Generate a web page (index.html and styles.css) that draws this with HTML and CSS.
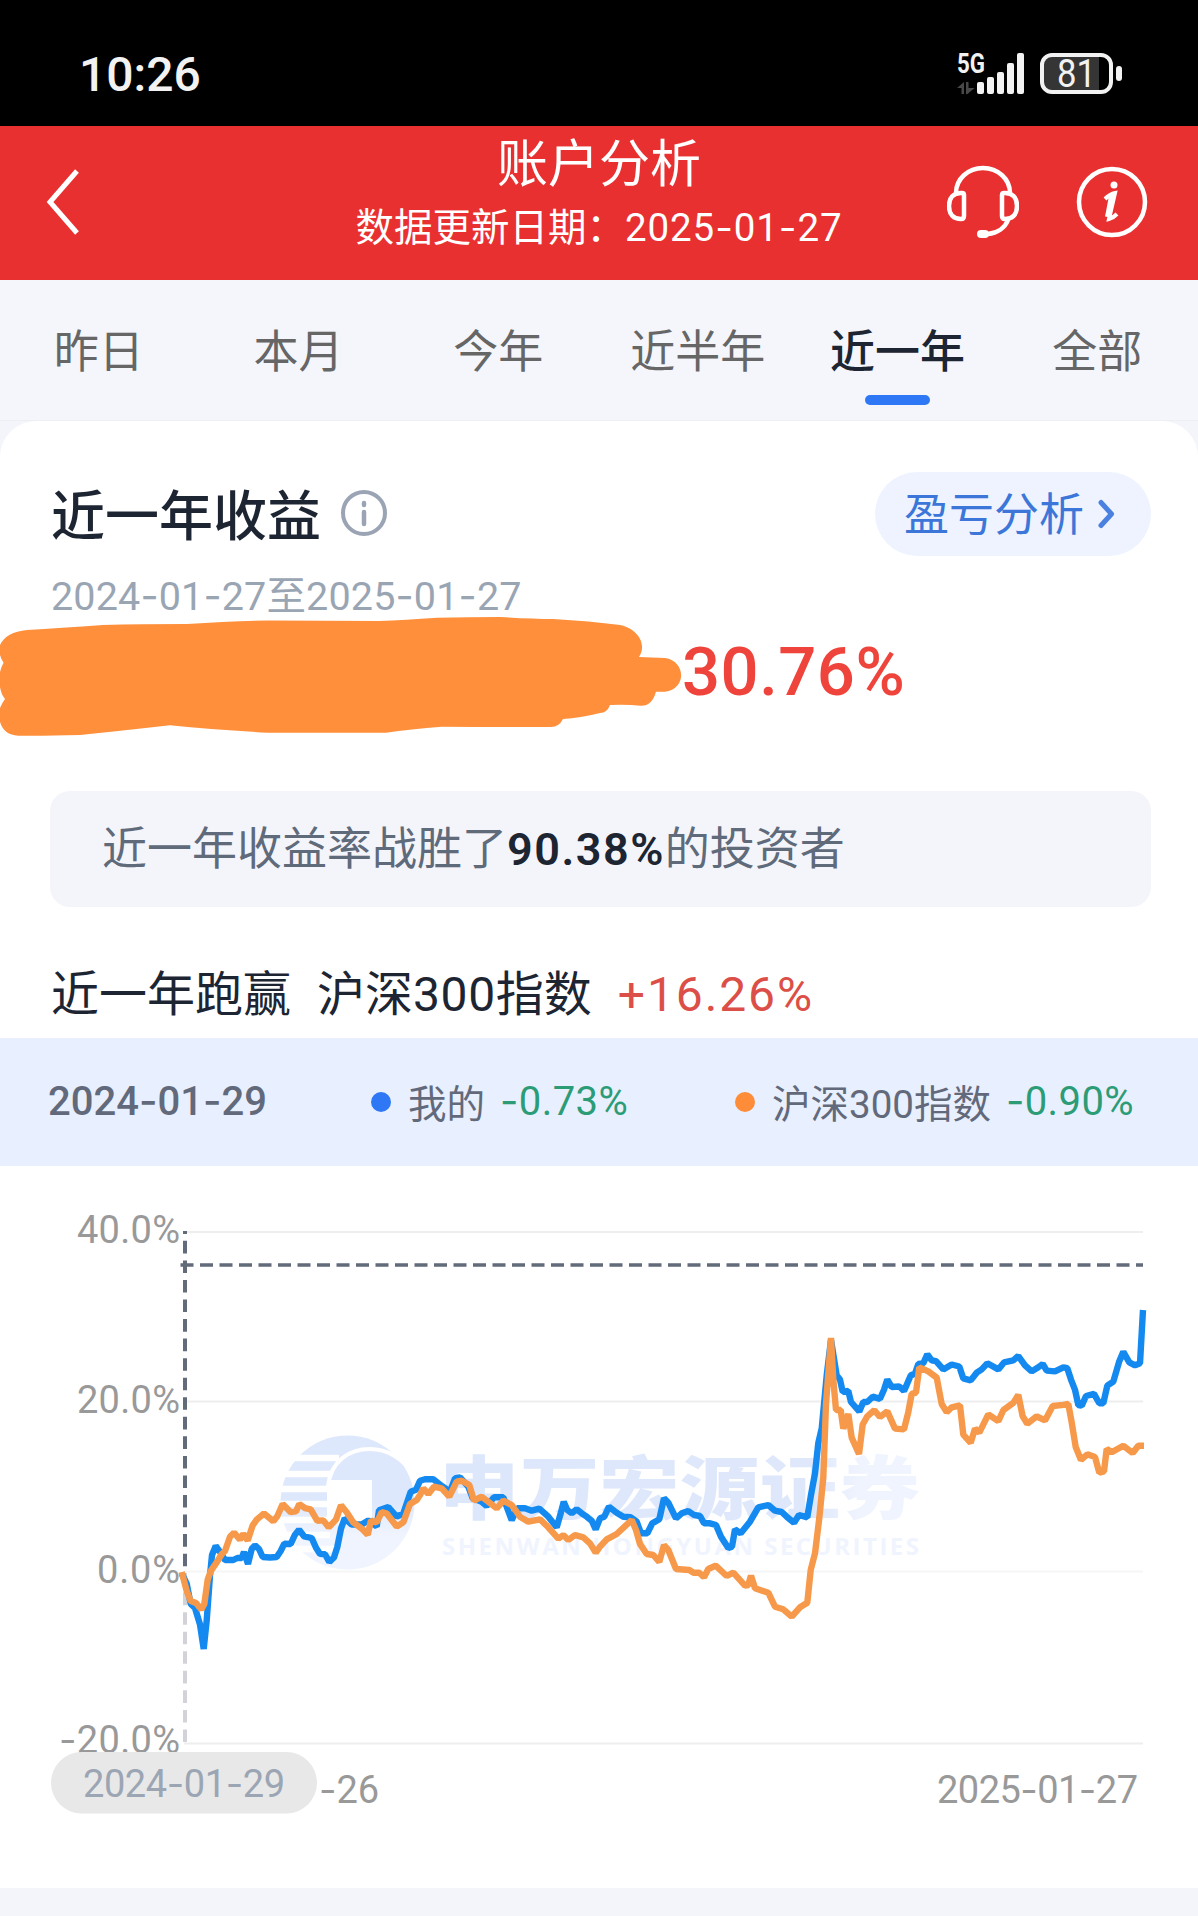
FILE: index.html
```html
<!DOCTYPE html>
<html lang="zh-CN">
<head>
<meta charset="utf-8">
<title>账户分析</title>
<link rel="stylesheet" href="styles.css">
</head>
<body>
<div class="status">
  <span class="clock">10:26</span>
  <svg class="status-icons" width="172" height="64" viewBox="952 40 172 64">
    <text x="957" y="73" class="net" textLength="28" lengthAdjust="spacingAndGlyphs">5G</text>
    <path d="M957 88l7-6v12h-2.500v-6zM966 82h2.500v6h6l-7 6h-1.500z" fill="#484848"/>
    <g fill="#f2f2f2">
      <rect x="977" y="82" width="7" height="12" rx="2"/><rect x="987" y="77" width="7" height="17" rx="2"/><rect x="997" y="72" width="7" height="22" rx="2"/><rect x="1007" y="63" width="7" height="31" rx="2"/><rect x="1017" y="53" width="7" height="41" rx="2"/>
      <rect x="1116" y="66" width="6" height="15" rx="3"/>
    </g>
    <path d="M1051 55h48v37h-48q-8 0-8-8V63q0-8 8-8z" fill="#353535"/>
    <rect x="1042" y="55" width="69" height="37" rx="10" fill="none" stroke="#f2f2f2" stroke-width="4"/>
    <text x="1057" y="86.500" class="battery" textLength="39" lengthAdjust="spacingAndGlyphs">81</text>
  </svg>
</div>
<header class="header">
  <svg class="back" width="36" height="76" viewBox="0 0 36 76"><path d="M31 7L4 38l27 31" fill="none" stroke="#fff" stroke-width="5"/></svg>
  <div class="header-text">
    <h1>账户分析</h1>
    <p>数据更新日期：<span>2025<i>-</i>01<i>-</i>27</span></p>
  </div>
  <div class="header-icons">
    <svg width="72" height="76" viewBox="0 0 72 76" fill="none" stroke="#fff" stroke-width="4.500" stroke-linecap="round">
      <path d="M9 29C9 15 21 4 36 4s27 11 27 25"/>
      <path d="M14 29h1q2 0 2 2v21q0 3-3 3C7 55 2 51 2 42s5-13 12-13zM58 29h-1q-2 0-2 2v21q0 3 3 3c7 0 12-4 12-13s-5-13-12-13z"/>
      <path d="M61 56C58 64 50 69 41 70"/><path d="M34 70h4" stroke-width="8"/>
    </svg>
    <svg width="72" height="76" viewBox="0 0 72 76">
      <circle cx="36" cy="38" r="33" fill="none" stroke="#fff" stroke-width="4.500"/>
      <circle cx="38" cy="21" r="3.500" fill="#fff"/>
      <path d="M29 35q5-5 10-6l-6 26q4-1 8-5" fill="none" stroke="#fff" stroke-width="4"/><path d="M36 32l-4 21" stroke="#fff" stroke-width="6"/>
    </svg>
  </div>
</header>
<nav class="tabs">
  <span>昨日</span><span>本月</span><span>今年</span><span>近半年</span><span class="active">近一年</span><span>全部</span>
</nav>
<main class="card">
  <section class="title-row">
    <h2>近一年收益</h2>
    <svg class="info" width="48" height="48" viewBox="0 0 48 48"><circle cx="24" cy="23" r="21" fill="none" stroke="#9aa4b4" stroke-width="4"/><path d="M24 22v12M24 13v2" stroke="#9aa4b4" stroke-width="4.500" stroke-linecap="round"/></svg>
    <a class="analysis"><span>盈亏分析</span><svg width="18" height="32" viewBox="0 0 18 32"><path d="M3 4.500L13.500 16 3 27.500" fill="none" stroke="#4a80e0" stroke-width="5" stroke-linecap="round" stroke-linejoin="round"/></svg></a>
  </section>
  <p class="range">2024<i>-</i>01<i>-</i>27至2025<i>-</i>01<i>-</i>27</p>
  <section class="amount">
    <svg width="682" height="120" viewBox="0 617 682 120"><path fill="#ff8f3b" d="M0 645Q6 632 27 630Q60 628 103 625Q140 624 187 624Q230 621 268 620.500L379 621Q405 620 437 617.700Q470 617 500 617Q530 619 553 619Q590 621 620 625C636 628 648 643 639 657L665 658C686 661 687 689 665 691.700H656Q652 706 641 705.700Q625 704 610 705Q607 713 600 713Q580 718 563 719Q559 727 551 727Q490 727 442 726.700Q410 729 386 732.700H268Q215 730 170 725.300Q120 731 80 735Q45 736 18 735.700Q4 735 0 722V708Q2 703 5 699Q1 694 0 687V672Q1 667 3.600 662.700Q1 659 0 655z"/></svg>
    <strong>30.76%</strong>
  </section>
  <p class="beat">近一年收益率战胜了<b>90.38%</b>的投资者</p>
  <section class="versus"><span>近一年跑赢</span><span class="index">沪深<span class="num">300</span>指数</span><span class="gain">+16.26%</span></section>
  <section class="legend">
    <span class="date">2024<i>-</i>01<i>-</i>29</span>
    <span class="item mine"><span class="dot"></span>我的<em><i>-</i>0.73%</em></span>
    <span class="item bench"><span class="dot"></span>沪深300指数<em><i>-</i>0.90%</em></span>
  </section>
  <svg class="chart" width="1198" height="722" viewBox="0 1166 1198 722">
    <defs><linearGradient id="fade" x1="0" x2="1"><stop offset="0" stop-color="#dde7fb"/><stop offset=".78" stop-color="#dfe8fb"/><stop offset=".88" stop-color="#f0f4fe"/></linearGradient>
    <linearGradient id="globe" x1="0" y1="0" x2="0" y2="1"><stop offset=".5" stop-color="#dee8fc"/><stop offset=".75" stop-color="#f0f4fe"/></linearGradient></defs>
    <g class="grid"><path d="M184 1232H1143M184 1401.500H1143M184 1743.500H1143"/><path class="zero" d="M184 1571.500H1143"/></g>
    <g class="watermark">
      <circle cx="347.500" cy="1502.500" r="67" fill="url(#globe)"/>
      <path d="M278 1458h61M278 1474h53M278 1489h49M278 1504h49M278 1520h49M278 1535h52M278 1549h58" stroke="#fff" stroke-width="6.500"/>
      <path d="M327 1480h45v44h-45z" fill="#fff"/>
      <path d="M328 1486C331 1461 349 1449 370 1449c17 0 32 9 44 26" fill="none" stroke="#fff" stroke-width="4"/>
      <text x="439" y="1514" class="wm-cn" textLength="481" lengthAdjust="spacingAndGlyphs">申万宏源证券</text>
      <text x="442" y="1555" class="wm-en" textLength="477">SHENWAN HONGYUAN SECURITIES</text>
    </g>
    <path d="M185 1571V1743" stroke="#d2d3d8" stroke-width="4" stroke-dasharray="12.600 6.950" stroke-dashoffset="17.500"/>
    <path d="M185 1231V1571" stroke="#626b7a" stroke-width="4" stroke-dasharray="12.600 6.950" stroke-dashoffset="9.700"/>
    <path d="M180.500 1265H1143" stroke="#626b7a" stroke-width="3.500" stroke-dasharray="13 6.500"/>
    <polyline class="line mine-line" points="181.7,1573.500 186.7,1583.7 190.7,1604 195,1608 200,1624.500 203.7,1649 206.7,1620.4 210,1575.500 212,1555 215.7,1546 220,1551.8 225,1560 233.3,1560 237.3,1558 241.7,1558 244,1552 248,1564 251.7,1549 255,1545.3 259,1549 262.7,1557 270,1557.500 276.7,1557 280.7,1551 284.3,1543.7 290.7,1544 295,1534.7 299,1529.8 304,1536.3 311.7,1538 316,1547.8 320,1553.9 325,1554.3 329.3,1562 334,1557.500 337.3,1547 341,1528.6 344.7,1518.4 351.7,1524.500 361.7,1524.500 368.3,1520.4 376.7,1526.500 379,1510.2 388.3,1507 396.7,1516.7 403.3,1513.500 410.7,1491.8 416,1489.8 420,1480.8 425,1479.3 433.3,1479.3 441.7,1486 450,1491.7 455,1478.3 460,1477.3 468.3,1486.7 472.7,1498.3 481.7,1501.7 486.7,1506 494,1497.3 503.3,1497.3 507.3,1508.3 511.7,1520 517.3,1508.3 525,1508.3 531.7,1510.7 539.3,1508.7 548.3,1516.7 556.7,1527.3 560.7,1513.3 563.7,1501.7 567.3,1510 571.7,1513.3 576.7,1509.3 581.7,1513.3 586.7,1516.7 591.7,1520.7 595.7,1529.3 600,1518.3 604.3,1516.7 609,1506.7 616.7,1512.7 623.3,1516.7 630.7,1517.3 636.7,1521.7 641,1533.3 647.3,1533.3 652.3,1523.3 659.3,1519.3 664,1498.3 668.3,1502.7 676,1518.3 681.7,1513.3 688.3,1511 694,1515 700,1516 704,1523.3 710,1523.3 716,1525 721,1536.7 728.3,1548 732,1546.7 735,1529.3 740.7,1533.3 750,1521.7 758.3,1507.3 768.3,1505 775,1510.7 781.7,1512 786.7,1516.7 794,1522.7 799,1515 807.3,1517.3 810.7,1496.7 815,1473.3 818.3,1443 821.7,1428.6 826.7,1375.500 831,1340 836.7,1375.500 840,1379.6 842.7,1391.8 848.3,1391 851,1402 859.3,1411.4 863.3,1402 867.3,1402 872.7,1396.7 880,1398.8 884,1389.8 887.3,1379.6 891.7,1387 899.3,1386.500 904,1391 910.7,1375.500 915,1373.500 918.3,1364 923.3,1363.3 927.3,1354.3 931.7,1360.4 936,1361.2 943.3,1369.4 951.7,1364.500 959.3,1366.500 963.3,1378.4 970.7,1380.4 976.7,1372.7 981.7,1369.4 987.3,1363.3 998.3,1369.4 1004,1362.4 1013.3,1360.4 1018.3,1356 1025,1365.3 1031.7,1371.4 1038.3,1367.3 1042.7,1364 1046.7,1370.6 1055,1371.4 1063.3,1367.3 1067.3,1368.2 1071,1379.6 1075,1389.8 1078.3,1405 1081.7,1405.7 1086,1396 1094,1393.9 1099.3,1403.3 1103.3,1403.3 1107.3,1385.7 1113.3,1381.6 1119.3,1361.2 1123.3,1351.8 1129.3,1362.4 1135,1365.3 1140,1363.3 1143,1310"/>
    <polyline class="line bench-line" points="181.7,1572 186.7,1591 190.7,1601 196,1602.9 201.3,1609.4 204.3,1604 207.7,1579.6 211,1570.6 216.7,1562.4 221.7,1554.3 225,1551 230,1536.7 234,1532.7 240,1539.6 243.3,1533.9 247.7,1540.4 252.7,1525.3 256.7,1519.6 264,1513.500 273.3,1521.2 277.3,1516.3 282.7,1504 290.7,1512.2 296,1511.4 299.3,1504 305,1508.2 310.7,1509.4 317.3,1520.8 323.3,1520.4 328.7,1527.3 336,1519.6 341,1505.3 346.7,1512.2 353.3,1522.4 361.7,1528.6 367.7,1534.7 371,1520.4 376.7,1522.4 381.7,1512.2 386.7,1513.500 396.7,1526.500 403.3,1522.4 410,1504 416.7,1500 420,1495 423.3,1488.3 428.3,1494 434,1486.7 441.7,1488.3 449.3,1496.7 456.7,1481.7 461.7,1480.7 469.3,1485 474,1500.7 481.7,1496.7 488.3,1501.7 496.7,1508.3 503.3,1500.7 511.7,1505 520,1516.7 528.3,1521.7 540,1519.3 548.3,1527.3 558.3,1538.7 563.3,1535 568.3,1540 575,1535 583.3,1537.3 590,1543.3 595.7,1552.7 600,1546.7 606.7,1539.3 616.7,1534 631.7,1520 636,1530 640,1544 646.7,1554 653.3,1555 659.3,1562 664,1545 668.3,1550 676,1569 689.3,1570 693.3,1572.7 699.3,1572.7 704,1577.3 708.3,1569 715.7,1565.7 726.7,1576 733.3,1572.7 745,1585.7 748.3,1585 751,1575.7 755,1588.3 768.3,1592.7 775,1606.7 783.3,1609.3 791.7,1616.7 800,1607.3 807.3,1602.7 810.7,1570 815,1553.3 819.3,1518 823.3,1477.6 826,1404 831,1338 833.3,1379.6 836,1410 840.7,1410 843.3,1428.6 848.3,1414 851.7,1437.6 859,1454 862.7,1424.500 867.3,1416.3 874.3,1410.2 880,1417 887.3,1411.4 895,1428.6 904,1429.4 908.3,1412.2 911.7,1393.9 916,1392.7 919.3,1367.3 928.3,1371.4 936.7,1377.6 941.7,1404 946.7,1412.2 951.7,1407.3 960,1405.3 963.3,1434.7 970.7,1442.9 975,1428.6 979.3,1432.7 988.3,1414.3 998.3,1421.2 1003.3,1410.2 1013.3,1402.9 1018.3,1395 1022.7,1416.3 1027.3,1423.7 1036.7,1416.3 1045,1420.4 1052.7,1406 1063.3,1404.9 1068.3,1404 1071.7,1422.4 1075.7,1447 1081,1460 1087.3,1454.3 1095,1457 1099.3,1472.7 1104,1471.4 1106.7,1449 1111.7,1452.2 1123.3,1445.7 1132.7,1453 1138.3,1445.7 1144,1445.7"/>
    <g class="axis">
      <text x="77" y="1242.500" textLength="103">40.0%</text>
      <text x="77" y="1412.500" textLength="103">20.0%</text>
      <text x="97" y="1583" textLength="83">0.0%</text>
      <text x="59" y="1752.500" textLength="121"><tspan class="dash">-</tspan>20.0%</text>
      <text x="319" y="1803" textLength="60"><tspan class="dash">-</tspan>26</text>
      <text x="937" y="1803" textLength="201">2025<tspan class="dash">-</tspan>01<tspan class="dash">-</tspan>27</text>
    </g>
    <rect x="51" y="1752" width="266" height="61.500" rx="30.700" fill="#e8e8e8"/>
    <text x="83" y="1797" class="marker" textLength="202">2024<tspan class="dash">-</tspan>01<tspan class="dash">-</tspan>29</text>
  </svg>
</main>
</body>
</html>
```
FILE: styles.css
```css
* { box-sizing: border-box; margin: 0; padding: 0; }
body { width: 1198px; height: 1916px; overflow: hidden; background: #f4f5fa; font-family: Roboto, "Noto Sans CJK SC", sans-serif; color: #1d2533; }
svg { display: block; flex: none; }
h1, h2 { font-weight: 400; }
i { font-style: normal; font-family: Inter, sans-serif; }
em { font-style: normal; }

.status { display: flex; align-items: center; justify-content: space-between; height: 126px; padding: 18px 74px 0 79px; background: #000; }
.clock { padding-top: 5px; color: #f2f2f2; font-size: 48px; font-weight: 500; line-height: 56px; letter-spacing: 0; }
.net { font: 700 28px Roboto, sans-serif; fill: #f2f2f2; }
.battery { font: 400 38px Roboto, sans-serif; fill: #f2f2f2; }

.header { display: grid; grid-template-columns: 300px 1fr 300px; height: 154px; background: #e93030; color: #fff; }
.back { margin: 38px 0 0 46px; }
.header-text { text-align: center; white-space: nowrap; }
.header-text h1 { margin-top: 8px; font-size: 51px; line-height: 62px; }
.header-text p { margin-top: 8px; font-size: 38.5px; line-height: 46px; }
.header-text p span { letter-spacing: .9px; }
.header-icons { display: flex; gap: 57px; padding: 38px 0 0 49px; }

.tabs { display: grid; grid-template-columns: repeat(6, 1fr); height: 141px; background: #f4f6fb; border-bottom: 1px solid #eeeff3; }
.tabs span { display: flex; flex-direction: column; align-items: center; padding: 43px 2px 0 0; font-size: 45px; line-height: 60px; color: #666; }
.tabs .active { color: #1d2533; font-weight: 500; }
.tabs .active::after { content: ""; width: 65px; height: 10px; margin-top: 12px; border-radius: 5px; background: #2f78f5; }

.card { height: 1467px; padding-top: 51px; border-radius: 36px 36px 0 0; background: #fff; }
.title-row { display: flex; align-items: center; height: 84px; padding: 0 47px 0 51px; }
.title-row h2 { padding-top: 8px; font-size: 54px; line-height: 76px; font-weight: 500; }
.info { margin-left: 19px; }
.analysis { display: flex; align-items: center; gap: 14px; width: 276px; height: 84px; margin-left: auto; padding-left: 29px; border-radius: 42px; background: #eef3ff; color: #3b76d8; font-size: 45px; }
.analysis span { padding-bottom: 5px; }
.range { height: 41px; margin-top: 20px; padding-left: 51px; color: #9aa5b3; font-size: 39.5px; line-height: 41px; letter-spacing: .15px; }
.amount { display: flex; height: 120px; }
.amount strong { font-size: 67px; font-weight: 500; line-height: 110px; color: #ef443b; letter-spacing: .5px; }
.beat { height: 116px; margin: 54px 47px 0 50px; padding-left: 52px; border-radius: 20px; background: #f4f5fa; color: #5f6a7a; font-size: 45px; line-height: 117px; }
.beat b { color: #1d2533; font-weight: 600; letter-spacing: 1.5px; }
.versus { display: flex; height: 131px; padding: 43px 0 0 51px; font-size: 48px; line-height: 89px; }
.versus .index { margin-left: 26px; }
.versus .num { letter-spacing: .6px; }
.versus .gain { margin-left: 26px; color: #dc4f48; letter-spacing: 1.9px; }

.legend { display: flex; align-items: center; height: 128px; padding: 0 0 3px 48px; background: #e8effe; color: #62697a; font-size: 38.5px; }
.legend .date { width: 322px; font-size: 40px; font-weight: 500; }
.item { display: flex; align-items: center; }
.mine { width: 364px; }
.dot { width: 20px; height: 20px; margin: 3px 17px 0 1px; border-radius: 50%; background: #2f78f5; }
.bench .dot { background: #ff8c38; }
.item em { margin-left: 15px; font-size: 40px; letter-spacing: .4px; color: #2c9c76; }

.grid { stroke: #eeeeef; stroke-width: 2; }
.grid .zero { stroke: #f6f6f7; }
.line { fill: none; stroke-width: 6.4; stroke-linejoin: bevel; }
.mine-line { stroke: #148af0; }
.bench-line { stroke: #f7994a; }
.axis, .marker { font: 400 38px Roboto, sans-serif; fill: #999; }
.marker { fill: #9ba5b3; }
.dash { font-family: Inter, sans-serif; }
.wm-cn { font: 900 69px "Noto Sans CJK SC", sans-serif; fill: url(#fade); }
.wm-en { font: 700 24px "Open Sans", sans-serif; fill: #f0f4fe; }
```
